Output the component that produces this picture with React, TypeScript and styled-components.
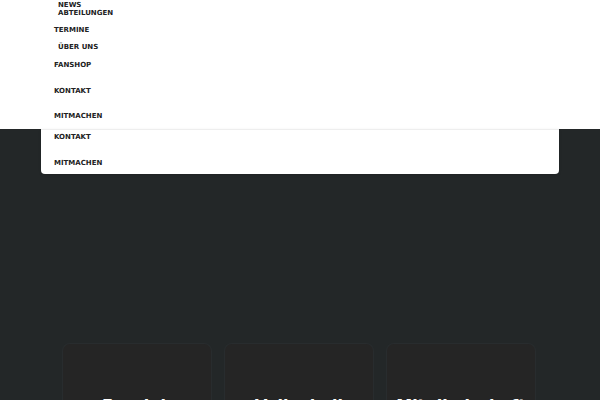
import styled, { createGlobalStyle } from 'styled-components';

const GlobalStyle = createGlobalStyle`
  html, body {
    margin: 0;
    padding: 0;
    background: #232728;
    font-family: "DejaVu Sans", Verdana, sans-serif;
    overflow: hidden;
  }
`;

const Page = styled.div`
  width: 600px;
  height: 400px;
  overflow: hidden;
  background: #232728;
`;

const Header = styled.header`
  height: 129px;
  background: #ffffff;
  padding: 1px 0 0 54px;
  box-sizing: border-box;
`;

const NavList = styled.ul`
  list-style: none;
  margin: 0;
  padding: 0;
  display: flex;
  flex-direction: column;
  align-items: flex-start;
`;

const NavItem = styled.li<{ $indent?: number; $space?: number }>`
  margin-top: ${(p) => p.$space ?? 0}px;
  padding-left: ${(p) => p.$indent ?? 0}px;
  font-size: 7px;
  line-height: 8px;
  font-weight: 700;
  color: #222222;
  text-transform: uppercase;
  white-space: nowrap;
`;

const Dropdown = styled.div`
  margin: 0 41px;
  background: #ffffff;
  border-radius: 0 0 4px 4px;
  box-shadow: 0 1px 3px rgba(0, 0, 0, 0.12), inset 0 1px 0 #eeeeee;
  padding: 4px 13px 7px;
`;

const Cards = styled.section`
  margin-top: 170px;
  padding-left: 63px;
  display: grid;
  grid-template-columns: repeat(3, 148px);
  column-gap: 14px;
`;

const Card = styled.div`
  height: 140px;
  background: #252525;
  border-radius: 7px;
  box-shadow: 0 0 0 1px #282c2e;
  padding-top: 52px;
  box-sizing: border-box;
  text-align: center;
`;

const CardTitle = styled.h3`
  margin: 0;
  color: #ffffff;
  font-size: 16px;
  font-weight: 700;
  line-height: 20px;
`;

const topItems = [
  { label: 'News', indent: 4, space: 0 },
  { label: 'Abteilungen', indent: 4, space: 0 },
  { label: 'Termine', indent: 0, space: 9 },
  { label: 'Über uns', indent: 4, space: 9 },
  { label: 'Fanshop', indent: 0, space: 10 },
  { label: 'Kontakt', indent: 0, space: 18 },
  { label: 'Mitmachen', indent: 0, space: 17 },
];

const dropItems = [
  { label: 'Kontakt', space: 0 },
  { label: 'Mitmachen', space: 18 },
];

const cards = ['Fanclub', 'Volleyball', 'Mitgliedschaft'];

export default function App() {
  return (
    <Page>
      <GlobalStyle />
      <Header>
        <NavList>
          {topItems.map((item) => (
            <NavItem key={item.label} $indent={item.indent} $space={item.space}>
              {item.label}
            </NavItem>
          ))}
        </NavList>
      </Header>
      <Dropdown>
        <NavList>
          {dropItems.map((item) => (
            <NavItem key={item.label} $space={item.space}>
              {item.label}
            </NavItem>
          ))}
        </NavList>
      </Dropdown>
      <Cards>
        {cards.map((title) => (
          <Card key={title}>
            <CardTitle>{title}</CardTitle>
          </Card>
        ))}
      </Cards>
    </Page>
  );
}
